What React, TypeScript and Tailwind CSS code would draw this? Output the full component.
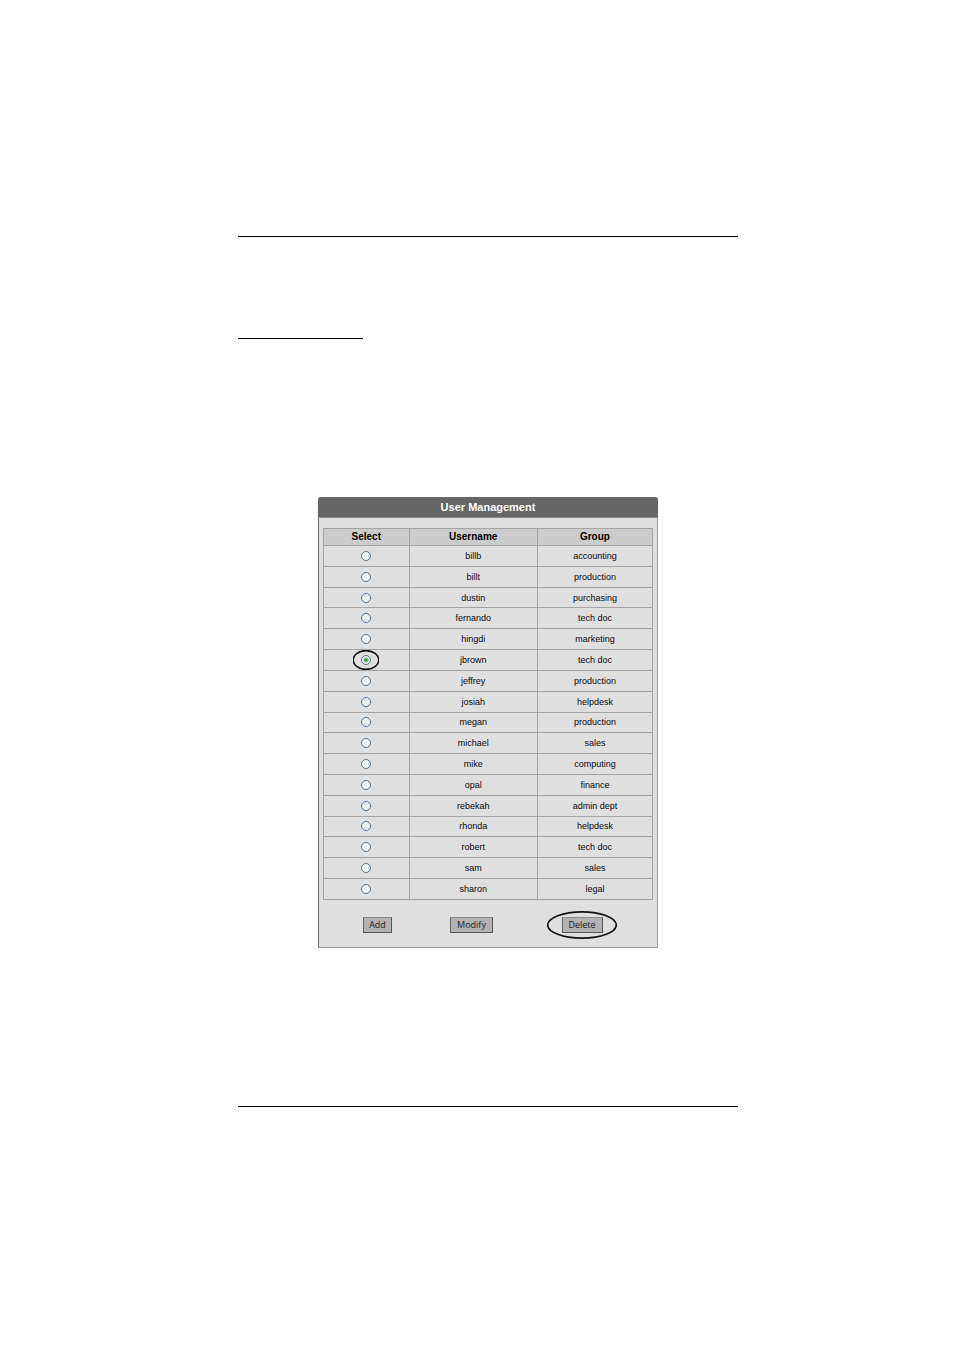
import { useState } from "react";

const users = [
  { name: "billb", group: "accounting" },
  { name: "billt", group: "production" },
  { name: "dustin", group: "purchasing" },
  { name: "fernando", group: "tech doc" },
  { name: "hingdi", group: "marketing" },
  { name: "jbrown", group: "tech doc" },
  { name: "jeffrey", group: "production" },
  { name: "josiah", group: "helpdesk" },
  { name: "megan", group: "production" },
  { name: "michael", group: "sales" },
  { name: "mike", group: "computing" },
  { name: "opal", group: "finance" },
  { name: "rebekah", group: "admin dept" },
  { name: "rhonda", group: "helpdesk" },
  { name: "robert", group: "tech doc" },
  { name: "sam", group: "sales" },
  { name: "sharon", group: "legal" },
];

const buttonClass =
  "relative h-4 border border-t-[#8a8a8a] border-l-[#666666] border-r-[#555555] border-b-[#555555] bg-[#b3b1b1] px-[5px] text-[9px] leading-[14px] text-[#1c1c28]";

function Ring({ className }: { className: string }) {
  return (
    <svg className={className} viewBox="0 0 100 100" preserveAspectRatio="none" aria-hidden="true">
      <ellipse
        cx="50"
        cy="50"
        rx="49"
        ry="47"
        fill="none"
        stroke="#111111"
        strokeWidth="1.6"
        vectorEffect="non-scaling-stroke"
      />
    </svg>
  );
}

function UserTable() {
  const [selected, setSelected] = useState("jbrown");
  return (
    <table className="h-[372px] w-full table-fixed border-collapse border border-[#999999] text-center">
      <colgroup>
        <col className="w-[26%]" />
        <col className="w-[39%]" />
        <col className="w-[35%]" />
      </colgroup>
      <thead>
        <tr className="h-[17px] bg-[#cccccc] text-[10px] leading-4 text-black">
          <th scope="col" className="border border-[#a3a3a3] p-0 font-bold">Select</th>
          <th scope="col" className="border border-[#a3a3a3] p-0 font-bold">Username</th>
          <th scope="col" className="border border-[#a3a3a3] p-0 font-bold">Group</th>
        </tr>
      </thead>
      <tbody>
        {users.map((user) => (
          <tr key={user.name} className="text-[9px] leading-4 text-[#08080f]">
            <td className="border border-[#a3a3a3] p-0">
              <span className="relative mx-auto flex size-[10px] items-center justify-center">
                <input
                  type="radio"
                  name="user"
                  aria-label={user.name}
                  checked={selected === user.name}
                  onChange={() => setSelected(user.name)}
                  className="size-[10px] appearance-none rounded-full border border-[#4b7198] bg-[#f3f3f0] checked:bg-[radial-gradient(circle,#22a722_0_1px,#f3f3f0_3px)]"
                />
                {selected === user.name && (
                  <Ring className="pointer-events-none absolute -inset-x-2 -inset-y-[5px] h-5 w-[26px] max-w-none" />
                )}
              </span>
            </td>
            <td className="border border-[#a3a3a3] p-0">{user.name}</td>
            <td className="border border-[#a3a3a3] p-0">{user.group}</td>
          </tr>
        ))}
      </tbody>
    </table>
  );
}

export default function App() {
  return (
    <div className="min-h-screen bg-white pr-[216px] pb-60 pl-[238px] font-['Liberation_Sans',sans-serif]">
      <header className="pt-[236px]">
        <hr className="border-t border-black" />
        <hr className="mt-[101px] w-1/4 border-t border-black" />
      </header>
      <main className="pt-[158px] pb-[158px]">
        <section className="mx-auto w-full max-w-[340px] rounded-t border border-t-0 border-r-[#999999] border-b-[#999999] border-l-[#666666] bg-[#dfdfdf]">
          <h1 className="-mx-px rounded-t-[3px] border-b border-[#8a8a8a] bg-[#666666] text-center text-[11px] leading-5 font-bold text-white">
            User Management
          </h1>
          <div className="px-1 pt-[10px]">
            <UserTable />
          </div>
          <div className="grid grid-cols-[117fr_71fr_150fr] justify-items-center pt-[17px] pb-[14px] font-['Open_Sans',sans-serif]">
            <button type="button" className={buttonClass}>Add</button>
            <button type="button" className={buttonClass + " min-w-[43px]"}>Modify</button>
            <button type="button" className={buttonClass + " min-w-[41px]"}>
              Delete
              <Ring className="pointer-events-none absolute -top-[7px] -left-4 h-7 w-[70px] max-w-none" />
            </button>
          </div>
        </section>
      </main>
      <footer>
        <hr className="border-t border-black" />
      </footer>
    </div>
  );
}
